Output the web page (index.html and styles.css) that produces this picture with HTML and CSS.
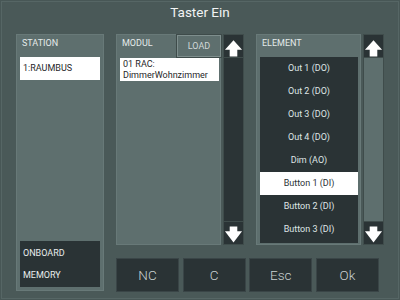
FILE: index.html
```html
<!DOCTYPE html>
<html lang="de">
<head>
  <meta charset="UTF-8">
  <title>Taster Ein</title>
  <link rel="stylesheet" href="styles.css">
</head>
<body>

<div class="window">
  <div class="title">Taster Ein</div>

  <div class="main">
    <!-- Station -->
    <div class="panel station">
      <div class="panel-head">STATION</div>
      <div class="field">1:RAUMBUS</div>
      <div class="spacer"></div>
      <div class="memory">
        <div class="memory-row">ONBOARD</div>
        <div class="memory-row">MEMORY</div>
      </div>
    </div>

    <div class="right">
      <div class="panels">
        <!-- Modul -->
        <div class="panel modul">
          <div class="panel-head">
            <span>MODUL</span>
            <button class="load">LOAD</button>
          </div>
          <div class="field field-two">
            <div>01 RAC:</div>
            <div>DimmerWohnzimmer</div>
          </div>
        </div>
        <div class="scroll scroll-dark">
          <div class="arrow">
            <svg viewBox="0 0 20 23" width="20" height="23"><polygon points="10,5 19,15 14,15 14,22 6,22 6,15 1,15" fill="#fff"/></svg>
          </div>
          <div class="track"></div>
          <div class="arrow">
            <svg viewBox="0 0 20 23" width="20" height="23"><polygon points="6,4 14,4 14,9 19,9 10,21 1,9 6,9" fill="#fff"/></svg>
          </div>
        </div>

        <!-- Element -->
        <div class="panel element">
          <div class="panel-head">ELEMENT</div>
          <ul class="list">
            <li>Out 1 (DO)</li>
            <li>Out 2 (DO)</li>
            <li>Out 3 (DO)</li>
            <li>Out 4 (DO)</li>
            <li>Dim (AO)</li>
            <li class="selected">Button 1 (DI)</li>
            <li>Button 2 (DI)</li>
            <li>Button 3 (DI)</li>
          </ul>
        </div>
        <div class="scroll scroll-light">
          <div class="arrow">
            <svg viewBox="0 0 20 23" width="20" height="23"><polygon points="10,5 19,15 14,15 14,22 6,22 6,15 1,15" fill="#fff"/></svg>
          </div>
          <div class="track"></div>
          <div class="arrow">
            <svg viewBox="0 0 20 23" width="20" height="23"><polygon points="6,4 14,4 14,9 19,9 10,21 1,9 6,9" fill="#fff"/></svg>
          </div>
        </div>
      </div>

      <div class="buttons">
        <button class="key">NC</button>
        <button class="key">C</button>
        <button class="key">Esc</button>
        <button class="key">Ok</button>
      </div>
    </div>
  </div>
</div>

</body>
</html>
```

FILE: styles.css
```css
* {
  margin: 0;
  padding: 0;
  box-sizing: border-box;
}
body {
  width: 400px;
  height: 300px;
  background: #485756;
  font-family: Roboto, 'Liberation Sans', sans-serif;
  overflow: hidden;
}
.window {
  width: 398px;
  height: 298px;
  margin: 1px;
  border: 1px solid #566665;
  background: #4a5958;
}
.title {
  height: 32px;
  line-height: 20px;
  text-align: center;
  font-size: 13.5px;
  color: #f2f4f4;
}
.main {
  display: flex;
  gap: 12px;
  padding-left: 14px;
}
.panel {
  background: #5e6f6e;
  border: 1px solid #687978;
  display: flex;
  flex-direction: column;
}
.panel-head {
  height: 22px;
  line-height: 17px;
  padding-left: 5px;
  font-size: 9px;
  color: #e4eaea;
}
.field {
  background: #fff;
  color: #1f2729;
  font-size: 9px;
  height: 23px;
  line-height: 23px;
  padding-left: 3px;
  margin: 0 3px;
}

/* station */
.station {
  width: 88px;
  height: 257px;
}
.spacer {
  flex: 1;
}
.memory {
  background: #2a3335;
  margin: 0 3px 3px;
  height: 46px;
  padding-top: 1px;
}
.memory-row {
  height: 22px;
  line-height: 22px;
  padding-left: 3px;
  font-size: 9px;
  color: #e8eded;
}

/* right side */
.right {
  display: flex;
  flex-direction: column;
  gap: 13px;
}
.panels {
  display: flex;
  height: 211px;
}
.modul {
  width: 105px;
}
.modul .panel-head {
  height: 23px;
  display: flex;
  justify-content: space-between;
  align-items: flex-start;
}
.load {
  width: 44px;
  height: 22px;
  margin-right: -1px;
  background: #5e6f6e;
  border: 1px solid #7e8e8d;
  box-shadow: 0 0 0 1px #3e4b4a;
  color: #d0d8d8;
  font-family: Roboto, sans-serif;
  font-size: 9px;
}
.field-two {
  line-height: 11px;
  padding-top: 1px;
  margin: 0 1px 0 3px;
}
.scroll {
  width: 21px;
  margin-left: 2px;
  display: flex;
  flex-direction: column;
  border: 1px solid #3f4c4b;
}
.arrow {
  height: 22px;
  background: #2a3335;
  display: flex;
  justify-content: center;
}
.arrow svg {
  display: block;
}
.track {
  flex: 1;
  border-top: 1px solid #3f4c4b;
  border-bottom: 1px solid #3f4c4b;
}
.scroll-dark .track {
  background: #2b3436;
}
.scroll-light .track {
  background: #5e6f6e;
}
.element {
  width: 105px;
  margin-left: 12px;
}
.list {
  list-style: none;
  background: #2a3335;
  margin: 0 2px 0 3px;
  height: 186px;
}
.list li {
  height: 23px;
  line-height: 23px;
  text-align: center;
  font-size: 9px;
  color: #dfe5e5;
}
.list li.selected {
  background: #fff;
  color: #2a3335;
}

/* bottom buttons */
.buttons {
  display: grid;
  grid-template-columns: repeat(4, 63px);
  column-gap: 3.67px;
  height: 34px;
}
.key {
  background: #2a3335;
  border: 1px solid #3a4547;
  color: #c9d1d1;
  font-family: Roboto, sans-serif;
  font-weight: 300;
  font-size: 13.5px;
}
```
